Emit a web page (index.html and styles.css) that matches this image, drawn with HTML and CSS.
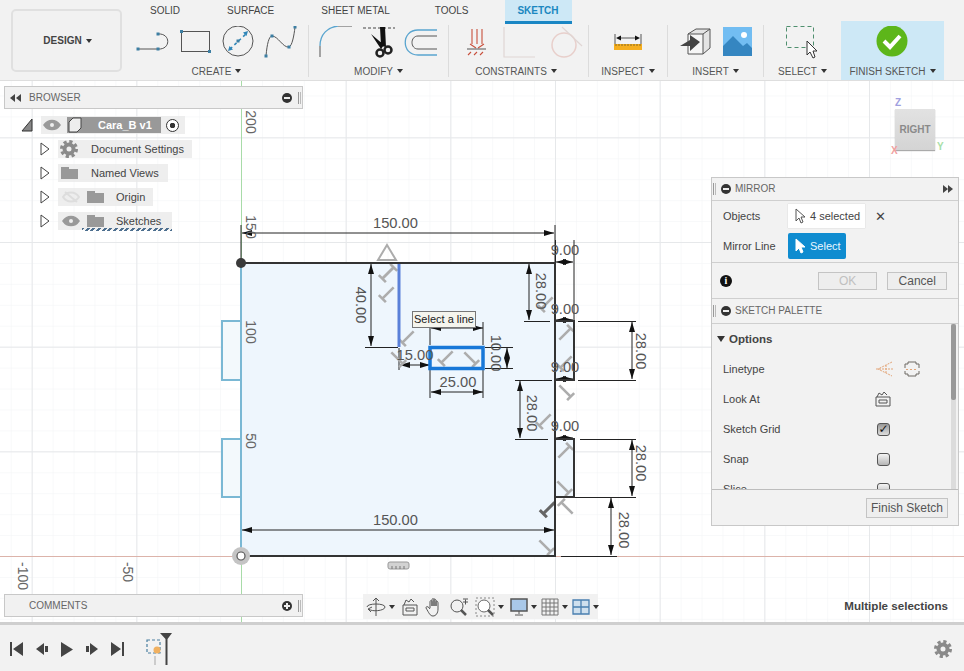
FILE: index.html
```html
<!DOCTYPE html>
<html lang="en">
<head>
<meta charset="utf-8">
<title>Sketch</title>
<link rel="stylesheet" href="styles.css">
</head>
<body>
<div class="app">
  <header class="toolbar">
    <button class="design">DESIGN<i class="caret"></i></button>
    <div class="main">
      <nav class="tabs">
        <span>SOLID</span><span>SURFACE</span><span>SHEET METAL</span><span class="tab-tools">TOOLS</span><span class="tab-on">SKETCH</span>
      </nav>
      <div class="ribbon">
        <section class="group g-create">
          <div class="icons">
            <svg width="36" height="32" viewBox="136 26 36 32"><path class="ik" d="M138 49H158M158 34C171 33 171 50 158 49"/><rect class="pt" x="136.500" y="47.500" width="3" height="3"/><rect class="pt" x="156.500" y="47.500" width="3" height="3"/><rect class="pt" x="156.500" y="32.500" width="3" height="3"/></svg>
            <svg width="36" height="32" viewBox="178 26 36 32"><rect class="ik" x="181.500" y="31.500" width="28" height="20"/><rect class="pt" x="180" y="30" width="3" height="3"/><rect class="pt" x="208" y="50" width="3" height="3"/></svg>
            <svg width="36" height="32" viewBox="220 26 36 32"><circle class="ik" cx="238" cy="41" r="15"/><path class="ib" d="M230 49L247 33"/><path class="pf" d="M228 51l5-1.500-3.500-3.500zM248 31l-5 1.500 3.500 3.500z"/><rect class="pt" x="236.500" y="39.500" width="3" height="3"/></svg>
            <svg width="36" height="32" viewBox="263 26 36 32"><path class="ik" d="M267 56C268 44 270 36 273 36C279 36 284 48 290 47C293 46 295 36 296 27"/><rect class="pt" x="265.500" y="54.500" width="3" height="3"/><rect class="pt" x="271.500" y="34.500" width="3" height="3"/><rect class="pt" x="288.500" y="45.500" width="3" height="3"/><rect class="pt" x="294.500" y="25.500" width="3" height="3"/></svg>
          </div>
          <div class="glabel">CREATE<i class="caret"></i></div>
        </section>
        <div class="sep"></div>
        <section class="group g-modify">
          <div class="icons">
            <svg width="38" height="32" viewBox="317 26 38 32"><path class="ik" d="M320 57V46"/><path class="ib2" d="M320 46C320 34 328 27 338 26"/><path class="ik" d="M338 26H352"/></svg>
            <svg width="38" height="33" viewBox="360 26 38 33"><path class="idash" d="M363 28H395"/><path class="pk" d="M380 27L385 27L386 47L381 46ZM371 34L384 45L381 49Z"/><circle class="sc" cx="380" cy="53" r="3.500"/><circle class="sc" cx="388" cy="50" r="3.500"/></svg>
            <svg width="36" height="32" viewBox="404 26 36 32"><path class="ib2" d="M438 30H419C402 30 402 55 419 55H438"/><path class="ik" d="M438 36H419C411 36 411 49 419 49H438"/></svg>
          </div>
          <div class="glabel">MODIFY<i class="caret"></i></div>
        </section>
        <div class="sep"></div>
        <section class="group g-constraints">
          <div class="icons">
            <svg width="25" height="32" viewBox="464 26 25 32"><path class="ired" d="M472 29V44M477 29V44M482 29V44M470 44L476 48M484 44L478 48"/><path class="ik" d="M467 49H486"/><path class="ired" d="M468 55L471 52M474 55L477 52M480 55L483 52"/></svg>
            <svg width="38" height="32" viewBox="500 26 38 32"><path class="ioff" d="M504 27V57H535"/></svg>
            <svg width="34" height="32" viewBox="543 26 34 32"><circle class="ioff2" cx="558" cy="45" r="12"/><path class="ioff" d="M556 27L576 46"/></svg>
          </div>
          <div class="glabel">CONSTRAINTS<i class="caret"></i></div>
        </section>
        <div class="sep"></div>
        <section class="group g-inspect">
          <div class="icons">
            <svg width="32" height="32" viewBox="612 26 32 32"><rect class="ruler" x="614" y="44" width="28" height="6"/><path class="ticks" d="M616 44v2M619 44v2M622 44v2M625 44v2M628 44v2M631 44v2M634 44v2M637 44v2M640 44v2"/><path class="ik" d="M615 34V44M641 34V44M620 38H636"/><path class="pk" d="M616 38l5-2.500v5zM640 38l-5-2.500v5z"/></svg>
          </div>
          <div class="glabel">INSPECT<i class="caret"></i></div>
        </section>
        <div class="sep"></div>
        <section class="group g-insert">
          <div class="icons">
            <svg width="34" height="32" viewBox="678 26 34 32"><path class="cube" d="M688 34L696 29H710V48L703 54H688Z"/><path class="cube2" d="M696 34H703V54H688V34Z"/><path class="ik" d="M688 34L696 29H710V48L703 54M703 54H688V34H703V54M703 34L710 29"/><path class="pd" d="M680 46L690 40V35L700 42L690 51V46Z"/></svg>
            <svg width="34" height="32" viewBox="721 26 34 32"><rect class="sky" x="723" y="27" width="29" height="29"/><path class="hill" d="M723 56V46L733 36L743 46L747 43L752 48V56Z"/><circle class="sun" cx="744" cy="35" r="3"/></svg>
          </div>
          <div class="glabel">INSERT<i class="caret"></i></div>
        </section>
        <div class="sep"></div>
        <section class="group g-select">
          <div class="icons">
            <svg width="36" height="34" viewBox="784 26 36 34"><rect class="seld" x="786.500" y="26.500" width="27" height="21"/><path class="curs" d="M807 41V55L810 52L813 58L815 57L813 51H817Z"/></svg>
          </div>
          <div class="glabel">SELECT<i class="caret"></i></div>
        </section>
        <section class="group g-finish">
          <div class="icons">
            <svg width="32" height="32" viewBox="877 26 32 32"><circle class="okc" cx="893" cy="41" r="15.500"/><path class="okp" d="M885 41L891 47L901 36"/></svg>
          </div>
          <div class="glabel">FINISH SKETCH<i class="caret"></i></div>
        </section>
      </div>
    </div>
  </header>

  <main class="canvas">
    <svg class="drawing" width="964" height="542" viewBox="0 80 964 542">
      <defs>
        <pattern id="minor" x="241" y="556" width="20.933" height="20.933" patternUnits="userSpaceOnUse"><path class="gmin" d="M0 0V21M0 0H21"/></pattern>
        <pattern id="major" x="241" y="556" width="104.667" height="104.667" patternUnits="userSpaceOnUse"><path class="gmaj" d="M0.500 0V105M0 0.500H105"/></pattern>
        <marker id="ar" viewBox="0 0 10 6" refX="10" refY="3" markerWidth="11" markerHeight="6" orient="auto-start-reverse" markerUnits="userSpaceOnUse"><path class="pk" d="M0 0L10 3L0 6Z"/></marker>
        <path id="tee" d="M0 -8V8M-5 8H5"/>
      </defs>
      <rect x="0" y="80" width="964" height="542" fill="url(#minor)"/>
      <rect x="0" y="80" width="964" height="542" fill="url(#major)"/>
      <path class="face" d="M241 263H555V321H574V380H555V439H574V497H555V556H241Z"/>
      <path class="face2" d="M241 321H222V380H241ZM241 439H222V497H241Z"/>
      <path class="axg" d="M241.500 80V622"/>
      <path class="axr" d="M0 556.500H964"/>

      <g class="ext">
        <path d="M241 225V263M555 225V263M555.500 240V263M574 240V321M365 347.500H398M430 322V345M483 322V345M430 370V398M483 370V398M485 347.500H513M485 368.500H513M399 348V370"/>
        <path d="M524 321.500H550M515 380.500H552M515 439.500H548M578 321.500H636M578 380.500H636M580 439.500H636M574 497.500H636M561 556.500H617M574 497.500H617"/>
        <path d="M241 523V556M555 523V556"/>
      </g>
      <g class="dim">
        <path d="M242 233H554"/>
        <path d="M242 530H554"/>
        <path d="M371 264V346"/>
        <path d="M400 365H430"/>
        <path d="M431 328H483"/>
        <path d="M431 392H483"/>
        <path d="M507 348V368"/>
        <path d="M529 264V320"/>
        <path d="M520 381V438"/>
        <path d="M632 322V379"/>
        <path d="M632 440V496"/>
        <path d="M611 498V555"/>
        <path d="M556 262H573"/>
        <path d="M556 320H573"/>
        <path d="M556 379H573"/>
        <path d="M556 438H573"/>
      </g>

      <g class="teeset">
        <use href="#tee" transform="translate(388 273) rotate(-135)"/>
        <use href="#tee" transform="translate(388 273) rotate(45)"/>
        <use href="#tee" transform="translate(388 293) rotate(45)"/>
        <use href="#tee" transform="translate(408 337) rotate(45)"/>
        <use href="#tee" transform="translate(397 358) rotate(-45)"/>
        <use href="#tee" transform="translate(447 357) rotate(45)"/>
        <use href="#tee" transform="translate(470 358) rotate(-45)"/>
        <use href="#tee" transform="translate(547 303) rotate(45)"/>
        <use href="#tee" transform="translate(565 334) rotate(225)"/>
        <use href="#tee" transform="translate(566 362) rotate(45)"/>
        <use href="#tee" transform="translate(565 391) rotate(-45)"/>
        <use href="#tee" transform="translate(545 420) rotate(45)"/>
        <use href="#tee" transform="translate(564 452) rotate(225)"/>
        <use href="#tee" transform="translate(563 487) rotate(-45)"/>
        <use href="#tee" transform="translate(567 508) rotate(135)"/>
        <use href="#tee" transform="translate(545 546) rotate(-45)"/>
      </g>
      <use class="teedark" href="#tee" transform="translate(549 508) rotate(45)"/>

      <path class="sk" d="M241 263H555V556H241M555 321H574V380H555M555 439H574V497H555"/>
      <path class="skb" d="M241 263V556M241 321H222V380H241M241 439H222V497H241"/>
      <path class="sel1" d="M399 264V347"/>
      <rect class="sel2" x="430" y="347.500" width="53" height="21"/>
      <circle class="grip" cx="241" cy="263" r="5"/>
      <circle class="oring" cx="241" cy="556" r="9"/>
      <circle class="ohole" cx="241" cy="556" r="4"/>
      <path class="tri" d="M387 245L396 260H378Z"/>
      <g class="rul"><rect x="388" y="562" width="21" height="7" rx="2"/><path d="M392 566V569M396 566V569M400 566V569M404 566V569"/></g>

      <g class="dt">
        <text x="395.500" y="228">150.00</text>
        <text x="395.500" y="525">150.00</text>
        <text x="458" y="387">25.00</text>
        <text x="415" y="360">15.00</text>
        <text x="565" y="255">9.00</text>
        <text x="565" y="314">9.00</text>
        <text x="565" y="372">9.00</text>
        <text x="565" y="431">9.00</text>
        <text transform="translate(356 305) rotate(90)">40.00</text>
        <text transform="translate(536 291) rotate(90)">28.00</text>
        <text transform="translate(527 413) rotate(90)">28.00</text>
        <text transform="translate(636 351) rotate(90)">28.00</text>
        <text transform="translate(636 463) rotate(90)">28.00</text>
        <text transform="translate(619 530) rotate(90)">28.00</text>
        <text transform="translate(491 353) rotate(90)">10.00</text>
        <text class="ax" transform="translate(246 122) rotate(90)">200</text>
        <text class="ax" transform="translate(246 227) rotate(90)">150</text>
        <text class="ax" transform="translate(246 332) rotate(90)">100</text>
        <text class="ax" transform="translate(246 441) rotate(90)">50</text>
        <text class="ax" transform="translate(18 576) rotate(90)">-100</text>
        <text class="ax" transform="translate(123 572) rotate(90)">-50</text>
      </g>
    </svg>

    <div class="tip">Select a line</div>

    <div class="cube-view">
      <span class="ax-z">Z</span><div class="cube-face">RIGHT</div><span class="ax-x">X</span><span class="ax-y">Y</span>
    </div>

    <aside class="browser">
      <div class="bar">
        <svg class="rw" width="12" height="8" viewBox="0 0 12 8"><path class="pd" d="M5 0V8L0 4ZM11 0V8L6 4Z"/></svg>
        <span class="bar-title">BROWSER</span>
        <i class="dot minus"></i><i class="grab"></i>
      </div>
      <div class="tree">
        <div class="row root">
          <svg class="exp" width="12" height="14" viewBox="0 0 12 14"><path class="tria" d="M11 1V13H1Z"/></svg>
          <div class="chip root-chip">
            <svg width="18" height="12" viewBox="0 0 18 12"><path class="eye" d="M1 6C5 0 13 0 17 6C13 12 5 12 1 6Z"/><circle class="eyei" cx="9" cy="6" r="2"/></svg>
            <div class="doc"><svg width="16" height="16" viewBox="0 0 16 16"><path class="cube3" d="M2 5L6 1H14V11L10 15H2Z"/></svg><b>Cara_B v1</b></div>
            <span class="radio"></span>
          </div>
        </div>
        <div class="row child">
          <svg class="exp2" width="10" height="14" viewBox="0 0 10 14"><path class="trio" d="M1 1L9 7L1 13Z"/></svg>
          <div class="chip c-doc"><svg class="gear" width="18" height="18" viewBox="0 0 18 18"><circle class="gt" cx="9" cy="9" r="7.500"/><circle class="gr" cx="9" cy="9" r="4.500"/></svg><span class="lb">Document Settings</span></div>
        </div>
        <div class="row child">
          <svg class="exp2" width="10" height="14" viewBox="0 0 10 14"><path class="trio" d="M1 1L9 7L1 13Z"/></svg>
          <div class="chip c-named"><svg class="fold" width="18" height="14" viewBox="0 0 18 14"><path d="M0 1H8V3H17V13H0Z"/></svg><span class="lb">Named Views</span></div>
        </div>
        <div class="row child">
          <svg class="exp2" width="10" height="14" viewBox="0 0 10 14"><path class="trio" d="M1 1L9 7L1 13Z"/></svg>
          <div class="chip c-origin"><svg class="eyeoff" width="18" height="12" viewBox="0 0 18 12"><path d="M1 6C5 0 13 0 17 6C13 12 5 12 1 6ZM3 1L15 11"/></svg><svg class="fold" width="18" height="14" viewBox="0 0 18 14"><path d="M0 1H8V3H17V13H0Z"/></svg><span class="lb">Origin</span></div>
        </div>
        <div class="row child">
          <svg class="exp2" width="10" height="14" viewBox="0 0 10 14"><path class="trio" d="M1 1L9 7L1 13Z"/></svg>
          <div class="chip c-sk"><svg width="18" height="12" viewBox="0 0 18 12"><path class="eye" d="M1 6C5 0 13 0 17 6C13 12 5 12 1 6Z"/><circle class="eyei" cx="9" cy="6" r="2"/></svg><svg class="fold" width="18" height="14" viewBox="0 0 18 14"><path d="M0 1H8V3H17V13H0Z"/></svg><span class="lb">Sketches</span><i class="hatch"></i></div>
        </div>
      </div>
    </aside>

    <aside class="mirror">
      <div class="phead"><i class="grab"></i><i class="dot minus"></i><span class="ptitle">MIRROR</span>
        <svg class="ff" width="10" height="8" viewBox="0 0 10 8"><path class="pd" d="M0 0V8L5 4ZM5 0V8L10 4Z"/></svg></div>
      <div class="mbody">
        <div class="mrow r1">
          <span class="mlab">Objects</span>
          <div class="pick white"><svg width="11" height="16" viewBox="0 0 11 16"><path class="curw" d="M1 1V13L4 10L6 15L8 14L6 9H10Z"/></svg>4 selected</div>
          <span class="x">✕</span>
        </div>
        <div class="mrow">
          <span class="mlab">Mirror Line</span>
          <div class="pick blue"><svg width="11" height="16" viewBox="0 0 11 16"><path class="curf" d="M1 1V13L4 10L6 15L8 14L6 9H10Z"/></svg>Select</div>
        </div>
      </div>
      <div class="actions">
        <span class="info">i</span>
        <button class="btn off">OK</button>
        <button class="btn">Cancel</button>
      </div>
      <div class="phead second"><i class="grab"></i><i class="dot minus"></i><span class="ptitle">SKETCH PALETTE</span></div>
      <div class="opts">
        <div class="scroll"></div>
        <div class="opt-head"><i class="caret big"></i>Options</div>
        <div class="opt"><span class="olab">Linetype</span>
          <svg width="20" height="16" viewBox="0 0 20 16"><path class="iorg" d="M1 8H19M17 1L3 8L17 15M11 4V12"/></svg>
          <svg class="second-ic" width="16" height="16" viewBox="0 0 16 16"><path class="iorg2" d="M1 7V3H4V1H12V3H15V7M1 10V13H4V15H12V13H15V10"/><path class="iorg3" d="M2 8.500H14"/></svg>
        </div>
        <div class="opt"><span class="olab">Look At</span>
          <svg width="16" height="16" viewBox="0 0 16 16"><path class="ik2" d="M1 6H15V15H1ZM2 6L4 2L7 4L9 1L12 4M4 9H12V12H4Z"/></svg>
        </div>
        <div class="opt"><span class="olab">Sketch Grid</span><span class="check on">✓</span></div>
        <div class="opt"><span class="olab">Snap</span><span class="check"></span></div>
        <div class="opt"><span class="olab">Slice</span><span class="check"></span></div>
      </div>
      <div class="pfoot"><button class="btn finish">Finish Sketch</button></div>
    </aside>

    <aside class="comments">
      <span class="bar-title">COMMENTS</span>
      <i class="dot plus"></i><i class="grab"></i>
    </aside>

    <div class="navbar">
      <svg width="20" height="20" viewBox="0 0 20 20"><path class="ik2" d="M10 1V19M7 4L10 1L13 4M1 10C1 6 19 6 19 10C19 14 5 15 3 12M5 15L2 12L6 10"/></svg><i class="caret"></i>
      <svg class="ml" width="18" height="18" viewBox="0 0 18 18"><path class="ik2" d="M2 7H16V17H2ZM3 7L5 2L8 4L10 1L13 4M5 10H13V13H5Z"/></svg>
      <svg class="ml" width="18" height="20" viewBox="0 0 18 20"><path class="ik2" d="M5 11V5C5 3 7 3 7 5V9M7 9V3C7 1 9 1 9 3V9M9 9V3C9 1 11 2 11 4V9M11 9V5C11 3 13 4 13 6V12C13 16 11 19 8 19C5 19 4 16 1 11C1 9 3 9 5 12"/></svg>
      <svg class="ml" width="20" height="20" viewBox="0 0 20 20"><circle class="ik2" cx="8" cy="9" r="6"/><path class="ihv" d="M12 13L17 18"/><path class="ik2" d="M14 5H19M16.500 2.500V7.500M14 2H19"/></svg>
      <svg class="ml" width="20" height="20" viewBox="0 0 20 20"><path class="idash2" d="M1 1H19V19H1Z"/><circle class="ifit" cx="9" cy="9" r="6"/><path class="ihv" d="M13 13L18 18"/></svg><i class="caret"></i>
      <svg class="ml" width="18" height="18" viewBox="0 0 18 18"><rect class="mon" x="1" y="1" width="16" height="12"/><path class="ik2" d="M9 13V16M5 17H13"/></svg><i class="caret"></i>
      <svg class="ml2" width="18" height="18" viewBox="0 0 18 18"><path class="igrid" d="M1 1H17V17H1ZM1 5H17M1 9H17M1 13H17M5 1V17M9 1V17M13 1V17"/></svg><i class="caret"></i>
      <svg class="ml2" width="18" height="16" viewBox="0 0 18 16"><path class="vp" d="M1 1H17V15H1ZM1 8H17M9 1V15"/></svg><i class="caret"></i>
    </div>

    <div class="status">Multiple selections</div>
  </main>

  <footer class="timeline">
    <div class="tbtns">
      <svg width="14" height="16" viewBox="0 0 14 16"><path class="pd" d="M0 1H2V15H0ZM13 1V15L3 8Z"/></svg>
      <svg width="14" height="14" viewBox="0 0 14 14"><path class="pd" d="M9 1V13L1 7ZM10 4H13V10H10Z"/></svg>
      <svg width="14" height="17" viewBox="0 0 14 17"><path class="pd" d="M1 1V16L13 8.500Z"/></svg>
      <svg width="14" height="14" viewBox="0 0 14 14"><path class="pd" d="M5 1V13L13 7ZM1 4H4V10H1Z"/></svg>
      <svg width="14" height="16" viewBox="0 0 14 16"><path class="pd" d="M1 1V15L11 8ZM12 1H14V15H12Z"/></svg>
    </div>
    <div class="feature">
      <svg width="30" height="33" viewBox="0 0 30 33"><rect class="tfr" x="2" y="7" width="13" height="13"/><circle class="tfp" cx="12" cy="17" r="3.500"/><path class="tfg" d="M10 23V32"/><path class="pd" d="M15 0H27L22.500 6V32H20.500V6Z"/></svg>
    </div>
    <svg class="gearb" width="18" height="18" viewBox="0 0 18 18"><circle class="gt" cx="9" cy="9" r="7.500"/><circle class="gr" cx="9" cy="9" r="4.500"/></svg>
  </footer>
</div>
</body>
</html>
```

FILE: styles.css
```css
* { box-sizing: border-box; }
html, body { margin: 0; height: 100%; overflow: hidden; }
body { font-family: "Liberation Sans", Arial, sans-serif; color: #444; background: #fff; }
.app { width: 964px; height: 671px; display: flex; flex-direction: column; }
svg { display: block; flex: none; }
i { display: block; }

/* toolbar */
.toolbar { height: 81px; flex: none; display: flex; padding-left: 11px; background: #f2f2f2; border-bottom: 1px solid #dedede; }
.design { width: 111px; height: 63px; margin-top: 9px; background: #f1f1f1; border: 2px solid #e0e0e0; border-radius: 5px; font: bold 10px "Liberation Sans", Arial, sans-serif; color: #444; display: flex; align-items: center; justify-content: center; padding: 0 0 0 2px; }
.caret { width: 0; height: 0; border: 3px solid transparent; border-top: 4px solid #333; border-bottom: 0; margin-left: 4px; flex: none; }
.main { margin-left: 13px; display: flex; flex-direction: column; flex: 1; }
.tabs { height: 24px; display: flex; gap: 47px; padding-left: 15px; font-size: 10px; line-height: 21px; color: #444; }
.tab-tools { margin-left: -2px; }
.tab-on { margin-left: -11px; width: 67px; height: 24px; text-align: center; background: #cde8f6; border-bottom: 3px solid #1a86c4; color: #1b87c0; font-weight: bold; }
.ribbon { display: flex; height: 56px; }
.group { display: flex; flex-direction: column; height: 56px; }
.icons { display: flex; height: 38px; padding-top: 2px; align-items: flex-start; }
.glabel { font-size: 10px; color: #555; display: flex; align-items: center; justify-content: center; height: 18px; }
.sep { width: 1px; height: 52px; margin-top: 1px; background: #dcdcdc; flex: none; }
.g-create { width: 173px; }
.g-create .icons { padding-left: 1px; gap: 6px; }
.g-create .glabel { padding-right: 10px; }
.g-modify { width: 139px; }
.g-modify .icons { padding-left: 8px; gap: 5px; }
.g-constraints { width: 139px; }
.g-constraints .icons { padding-left: 15px; gap: 11px; }
.g-constraints .glabel { padding-right: 5px; }
.g-inspect { width: 78px; }
.g-inspect .icons { padding-left: 23px; }
.g-insert { width: 95px; }
.g-insert .icons { padding-left: 10px; gap: 9px; }
.g-select { width: 77px; }
.g-select .icons { padding-left: 20px; }
.g-finish { width: 103px; height: 59px; margin-top: -3px; background: #cde8f6; }
.g-finish .icons { height: 41px; padding: 5px 0 0 35px; }

.ik { fill: none; stroke: #555; stroke-width: 1; }
.ik2 { fill: none; stroke: #555; stroke-width: 1; }
.ib { fill: none; stroke: #2f86b8; stroke-width: 1.5; stroke-dasharray: 3 3; }
.ib2 { fill: none; stroke: #5aa5cf; stroke-width: 1.3; }
.pf { fill: #2f86b8; }
.pt { fill: #3d7fa3; }
.idash { fill: none; stroke: #444; stroke-width: 1; stroke-dasharray: 3 2; }
.sc { fill: none; stroke: #222; stroke-width: 2.5; }
.ired { fill: none; stroke: #c8503c; stroke-width: 1.1; }
.ioff { fill: none; stroke: #e0d6d4; stroke-width: 1.2; }
.ioff2 { fill: none; stroke: #e8cfcb; stroke-width: 1.5; }
.iorg { fill: none; stroke: #e3a578; stroke-width: 1; stroke-dasharray: 2 1; }
.iorg2 { fill: none; stroke: #6f6a64; stroke-width: 1; }
.iorg3 { fill: none; stroke: #e3a578; stroke-width: 1; stroke-dasharray: 2 2; }
.ruler { fill: #f5ae1f; }
.ticks { fill: none; stroke: #8a6a20; stroke-width: 1; }
.pk { fill: #111; }
.pd { fill: #444; }
.cube { fill: #e4e4e4; }
.cube2 { fill: #f6f6f6; }
.sky { fill: #72bdf2; }
.hill { fill: #3586c1; }
.sun { fill: #fff; }
.seld { fill: none; stroke: #4f8f6e; stroke-width: 1; stroke-dasharray: 4 3; }
.curs { fill: #fff; stroke: #333; stroke-width: 1; }
.okc { fill: #5db61a; }
.okp { fill: none; stroke: #fff; stroke-width: 4; }

/* canvas */
.canvas { position: relative; flex: 1; overflow: hidden; background: #fff; }
.drawing { position: absolute; left: 0; top: -1px; }
.gmin { stroke: #f2f4f5; stroke-width: 1; fill: none; }
.gmaj { stroke: #e6e8ea; stroke-width: 1; fill: none; }
.face { fill: #eef6fd; }
.face2 { fill: #f3f9fc; }
.axg { stroke: #a8dba8; stroke-width: 1; fill: none; }
.axr { stroke: #dcb3aa; stroke-width: 1; fill: none; }
.ext path { stroke: #222; stroke-width: 1; fill: none; }
.dim path { stroke: #222; stroke-width: 1; fill: none; marker-start: url(#ar); marker-end: url(#ar); }
.teeset use { fill: none; stroke: #adadad; stroke-width: 2.6; }
.teedark { fill: none; stroke: #666; stroke-width: 3; }
.sk { stroke: #333; stroke-width: 2; fill: none; }
.skb { stroke: #7ab8d4; stroke-width: 2; fill: none; }
.sel1 { stroke: #5a80d8; stroke-width: 3; fill: none; }
.sel2 { stroke: #1878d8; stroke-width: 3.5; fill: none; }
.grip { fill: #3a3a3a; }
.oring { fill: #c4c4c4; }
.ohole { fill: #fff; stroke: #555; stroke-width: 1.2; }
.tri { fill: none; stroke: #acacac; stroke-width: 2; }
.rul rect { fill: #d2d2d2; stroke: #999; stroke-width: 1; }
.rul path { stroke: #777; stroke-width: 1; fill: none; }
.dt text { font: 14.7px "Liberation Sans", Arial, sans-serif; fill: #555; text-anchor: middle; }
.dt .ax { font-size: 14px; fill: #666; }

.tip { position: absolute; left: 412px; top: 230px; width: 64px; height: 17px; background: #f5f5ee; border: 1px solid #777; font-size: 11px; line-height: 15px; color: #222; text-align: center; }

.cube-view { position: absolute; left: 889px; top: 14px; width: 60px; height: 60px; }
.cube-face { position: absolute; left: 6px; top: 14px; width: 40px; height: 41px; background: linear-gradient(#e2e2e2, #d4d4d4); box-shadow: 0 1px 1px #aaa; font-size: 10px; font-weight: bold; line-height: 41px; text-align: center; color: #8a8a8a; }
.ax-z, .ax-x, .ax-y { position: absolute; font-size: 10px; font-weight: bold; }
.ax-z { left: 6px; top: 2px; color: #a0a0e0; }
.ax-x { left: 2px; top: 50px; color: #f0a0a0; }
.ax-y { left: 48px; top: 46px; color: #a8e0a8; }

/* panels */
.browser { position: absolute; left: 4px; top: 5px; width: 299px; }
.bar { display: flex; align-items: center; height: 23px; background: #f1f1f1; border: 1px solid #c8c8c8; padding-left: 5px; }
.rw { margin-right: 7px; }
.bar-title { font-size: 10px; color: #666; flex: 1; }
.dot { width: 10px; height: 10px; border-radius: 50%; background: #333; position: relative; flex: none; }
.minus::after { content: ""; position: absolute; left: 2px; right: 2px; top: 4px; height: 2px; background: #eee; }
.plus::after { content: ""; position: absolute; left: 2px; right: 2px; top: 4px; height: 2px; background: #eee; }
.plus::before { content: ""; position: absolute; top: 2px; bottom: 2px; left: 4px; width: 2px; background: #eee; }
.grab { width: 3px; height: 12px; border-left: 1px solid #999; border-right: 1px solid #bbb; margin: 0 1px 0 6px; flex: none; }
.tree { padding-top: 4px; }
.row { display: flex; align-items: center; height: 24px; }
.root { padding-left: 17px; }
.exp { margin-right: 8px; }
.tria { fill: #888; stroke: #333; stroke-width: 1; }
.child { padding-left: 36px; }
.exp2 { margin-right: 8px; }
.trio { fill: #fff; stroke: #444; stroke-width: 1; }
.chip { display: flex; align-items: center; height: 18px; background: rgba(232, 232, 232, .75); position: relative; flex: none; }
.root-chip { width: 144px; padding-left: 1px; gap: 6px; }
.root-chip > svg { margin-left: 1px; }
.eye { fill: #999; stroke: #999; stroke-width: 1.5; }
.eyei { fill: #eee; }
.doc { width: 94px; height: 16px; background: #999; display: flex; align-items: center; }
.doc b { font-size: 11px; color: #fff; margin-left: 15px; }
.cube3 { fill: #eee; stroke: #444; stroke-width: 1; }
.radio { width: 13px; height: 13px; border: 1.5px solid #333; border-radius: 50%; background: radial-gradient(circle, #333 0 2.5px, #fff 3px); flex: none; margin-left: -1px; }
.lb { font-size: 11px; color: #444; }
.c-doc { width: 134px; }
.gear { margin: 0 13px 0 2px; }
.gt { fill: none; stroke: #8a8a8a; stroke-width: 3; stroke-dasharray: 3.2 2.7; }
.gr { fill: none; stroke: #8a8a8a; stroke-width: 4; }
.gearb { margin: 2px 0 0 auto; }
.c-named { width: 110px; }
.c-named .fold { margin: 0 12px 0 3px; }
.fold path { fill: #999; }
.c-origin { width: 95px; }
.eyeoff { margin: 0 7px 0 4px; }
.eyeoff path { fill: none; stroke: #ddd; stroke-width: 2; }
.c-origin .fold { margin-right: 11px; }
.c-sk { width: 114px; }
.c-sk > svg:first-child { margin: 0 7px 0 4px; }
.c-sk .fold { margin-right: 11px; }
.hatch { position: absolute; left: 24px; right: 0; bottom: -1px; height: 3px; background: repeating-linear-gradient(-45deg, #4d6f8f 0 2px, transparent 2px 4px); }

.mirror { position: absolute; left: 711px; top: 96px; width: 248px; height: 349px; background: #f2f2f2; border: 1px solid #c8c8c8; display: flex; flex-direction: column; }
.phead { display: flex; align-items: center; height: 23px; flex: none; border-bottom: 1px solid #cfcfcf; padding-bottom: 1px; }
.phead .grab { margin: 0 5px 0 1px; }
.ptitle { font-size: 10px; color: #666; margin-left: 4px; flex: 1; }
.ff { margin-right: 5px; }
.mbody { height: 62px; flex: none; border-bottom: 1px solid #cfcfcf; display: flex; flex-direction: column; gap: 5px; padding-top: 3px; }
.mrow { display: flex; align-items: center; height: 26px; }
.r1 { height: 24px; }
.mlab { width: 76px; padding-left: 11px; font-size: 11px; color: #444; flex: none; }
.pick { height: 100%; display: flex; align-items: center; gap: 4px; padding-left: 7px; font-size: 11px; flex: none; }
.white { width: 77px; background: #fff; box-shadow: 0 0 1px #bbb; color: #444; }
.blue { width: 58px; background: #0f8cd0; color: #e8f6ff; border-radius: 2px; }
.curw { fill: #fff; stroke: #555; }
.curf { fill: #fff; stroke: #fff; }
.x { margin-left: 10px; font: bold 13px "DejaVu Sans", sans-serif; color: #444; }
.actions { height: 36px; flex: none; display: flex; align-items: center; border-bottom: 1px solid #cfcfcf; padding: 0 11px 0 8px; }
.info { width: 12px; height: 12px; border-radius: 50%; background: #111; color: #fff; font: bold 10px/12px "Liberation Serif", serif; text-align: center; margin-right: 86px; }
.btn { height: 18px; font: 12px "Liberation Sans", Arial, sans-serif; color: #555; background: #eee; border: 1px solid #c4c4c4; padding: 0; width: 60px; }
.btn.off { color: #c0c0c0; margin-right: 10px; }
.second { height: 25px; }
.opts { height: 166px; flex: none; overflow: hidden; position: relative; border-bottom: 1px solid #bdbdbd; }
.scroll { position: absolute; right: 2px; top: 0; width: 5px; height: 100%; background: #dcdcdc; }
.scroll::after { content: ""; display: block; width: 5px; height: 76px; background: #999; border-radius: 2px; }
.opt-head { display: flex; align-items: center; height: 30px; padding-left: 5px; font-size: 11.5px; font-weight: bold; color: #444; }
.big { border-width: 4px; border-top-width: 6px; border-bottom-width: 0; margin: 0 4px 0 0; }
.opt { display: flex; align-items: center; height: 30px; }
.olab { width: 163px; padding-left: 11px; font-size: 11px; color: #444; flex: none; }
.second-ic { margin-left: 9px; }
.check { width: 13px; height: 13px; border: 1px solid #555; border-radius: 3px; background: linear-gradient(#f4f4f4, #b5b5b5); margin-left: 2px; font: 12px/11px "DejaVu Sans", sans-serif; color: #111; text-align: center; }
.check.on { background: linear-gradient(#999, #ddd); }
.pfoot { flex: 1; display: flex; justify-content: flex-end; align-items: flex-start; padding: 8px 10px 0 0; }
.finish { width: 82px; height: 20px; }

.comments { position: absolute; left: 4px; top: 513px; width: 299px; height: 23px; display: flex; align-items: center; background: #f1f1f1; border: 1px solid #c8c8c8; padding-left: 24px; }

.navbar { position: absolute; left: 363px; top: 513px; width: 235px; height: 25px; background: #f1f1f1; display: flex; align-items: center; padding-left: 3px; }
.navbar .caret { margin-left: 3px; }
.ml { margin-left: 6px; }
.ml2 { margin-left: 4px; }
.ihv { fill: none; stroke: #555; stroke-width: 2.5; }
.idash2 { fill: none; stroke: #888; stroke-width: 1; stroke-dasharray: 2 2; }
.ifit { stroke: #666; stroke-width: 1; fill: #fff; }
.mon { fill: #a9c8e8; stroke: #555; stroke-width: 1.5; }
.igrid { fill: none; stroke: #777; stroke-width: 1; }
.vp { stroke: #4a7fb0; stroke-width: 1.3; fill: #cfe0ee; }

.status { position: absolute; right: 16px; top: 518px; font-size: 11.6px; font-weight: bold; color: #444; }

/* timeline */
.timeline { height: 49px; flex: none; background: #f2f2f2; border-top: 3px solid #cfcfcf; display: flex; align-items: center; padding: 0 12px 0 10px; }
.tbtns { display: flex; align-items: center; gap: 11px; margin-top: 2px; }
.feature { margin: 8px 0 0 21px; align-self: flex-start; }
.tfr { fill: none; stroke: #4a7fa0; stroke-width: 1.2; stroke-dasharray: 3 2; }
.tfp { fill: #f0b060; }
.tfg { fill: none; stroke: #ccc; stroke-width: 2; }
```
